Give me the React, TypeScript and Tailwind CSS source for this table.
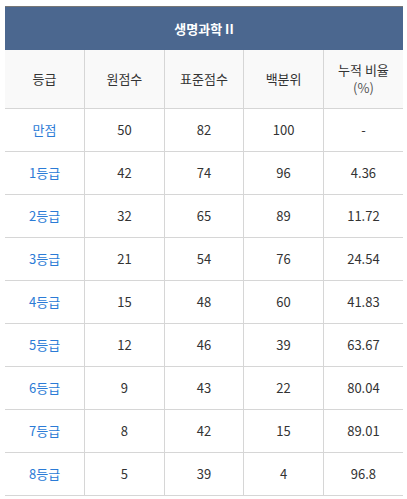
const rows = [
  ["만점", "50", "82", "100", "-"],
  ["1등급", "42", "74", "96", "4.36"],
  ["2등급", "32", "65", "89", "11.72"],
  ["3등급", "21", "54", "76", "24.54"],
  ["4등급", "15", "48", "60", "41.83"],
  ["5등급", "12", "46", "39", "63.67"],
  ["6등급", "9", "43", "22", "80.04"],
  ["7등급", "8", "42", "15", "89.01"],
  ["8등급", "5", "39", "4", "96.8"],
];

export default function App() {
  return (
    <div
      className="bg-white pl-[5px] pt-[6px] text-[13px] text-[#333]"
      style={{ fontFamily: '"Noto Sans CJK KR", "Noto Sans", sans-serif' }}
    >
      <table className="w-[398px] table-fixed border-collapse">
        <thead>
          <tr>
            <th
              colSpan={5}
              className="h-[43px] border-t border-[#777] bg-[#4b678f] text-center text-[13px] font-bold text-white"
            >
              생명과학 II
            </th>
          </tr>
          <tr className="bg-[#f9f9f9]">
            {["등급", "원점수", "표준점수", "백분위"].map((h, i) => (
              <th
                key={h}
                className={`h-[59px] border-b border-[#d6d6d6] text-center font-normal ${i > 0 ? "border-l" : ""}`}
              >
                {h}
              </th>
            ))}
            <th className="h-[59px] border-b border-l border-[#d6d6d6] text-center font-normal leading-[18px]">
              누적 비율
              <br />
              <span className="text-[#555]">(%)</span>
            </th>
          </tr>
        </thead>
        <tbody>
          {rows.map((r) => (
            <tr key={r[0]}>
              {r.map((c, i) => (
                <td
                  key={i}
                  className={`h-[43px] border-b border-[#d6d6d6] text-center ${i === 0 ? "text-[#2b7bd6]" : "border-l"}`}
                >
                  {c}
                </td>
              ))}
            </tr>
          ))}
        </tbody>
      </table>
    </div>
  );
}
